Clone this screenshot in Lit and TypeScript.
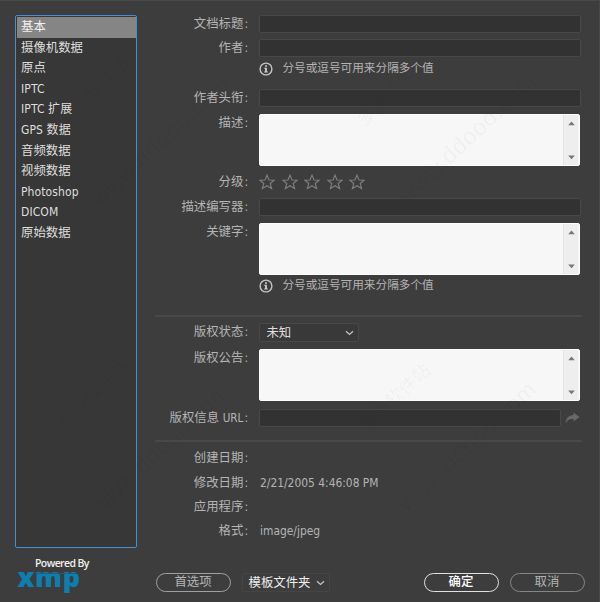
import { LitElement, html, css } from "lit";
import { customElement, property } from "lit/decorators.js";

const FONT = css`"DejaVu Sans Condensed", "DejaVu Sans", "Noto Sans CJK SC", sans-serif`;

@customElement("category-list")
class CategoryList extends LitElement {
  @property({ type: Array }) items: string[] = [];
  static styles = css`
    :host { display: block; box-sizing: border-box; width: 122px; height: 533px; border: 1px solid #4190d8; border-radius: 2px; background: #373737; padding: 1px 0.5px; }
    .item { height: 20.6px; line-height: 19.5px; padding-left: 4.5px; color: #dedede; white-space: nowrap; }
    .latin { font-size: 12px; line-height: 21px; letter-spacing: 0.1px; }
    .selected { background: #858585; color: #f2f2f2; }
  `;
  render() {
    return this.items.map((t, i) => html`<div class="item ${i === 0 ? "selected" : ""} ${/^[A-Z]/.test(t) ? "latin" : ""}">${t}</div>`);
  }
}

@customElement("text-area")
class TextArea extends LitElement {
  static styles = css`
    :host { display: flex; box-sizing: border-box; height: 52px; width: 321px; background: #f7f7f7; border-radius: 2px; overflow: hidden; border: 1px solid #fdfdfd; }
    .body { flex: 1; }
    .bar { width: 15px; background: #eeeeee; border-left: 1px solid #e4e4e4; display: flex; flex-direction: column; justify-content: space-between; align-items: center; padding: 6px 0 5px; box-sizing: border-box; margin-right: 1px; }
    svg { display: block; }
  `;
  render() {
    return html`<div class="body"></div>
      <div class="bar">
        <svg width="7" height="5"><path d="M0.2 4.2 3.5 0.6 6.8 4.2Z" fill="#777" /></svg>
        <svg width="7" height="5"><path d="M0.2 0.6 3.5 4.2 6.8 0.6Z" fill="#777" /></svg>
      </div>`;
  }
}

@customElement("app-root")
class AppRoot extends LitElement {
  static styles = css`
    :host { display: block; position: relative; box-sizing: border-box; width: 600px; height: 602px; overflow: hidden; background: #3d3d3d; border-top: 1px solid #494949; border-right: 1px solid #484848; font-family: ${FONT}; font-stretch: condensed; font-size: 12.4px; color: #b4b4b4; }
    .page { display: grid; grid-template-columns: 122px 426px; column-gap: 18.4px; padding: 14px 0 0 15px; }
    .form { display: grid; grid-template-columns: 93px 322px; column-gap: 11px; align-items: start;
      grid-template-rows: 24px 21px 29px 25px 59px 25px 25px 54px 38px 8px 26px 60px 31px 9px 25px 24px 24px 26px; }
    .label { text-align: right; line-height: 17px; height: 17px; white-space: nowrap; }
    .latin { font-size: 11.6px; }
    .colon { display: inline-block; width: 4px; margin-left: 1px; text-align: left; }
    .input { box-sizing: border-box; width: 321.5px; height: 17.5px; background: #323232; border: 1px solid #484848; border-radius: 2px; }
    .url { display: flex; align-items: center; gap: 4px; }
    .url .input { width: 302px; }
    .hint { display: flex; align-items: center; height: 17px; gap: 9px; grid-column: 2; line-height: 17px; font-size: 11.65px; white-space: nowrap; }
    .stars { display: flex; gap: 6.5px; height: 18px; align-items: center; }
    .rule { grid-column: 1 / 3; height: 2px; background: #494949; width: 427px; }
    .select { box-sizing: border-box; border: 1px solid #484848; border-radius: 2px; background: #393939; color: #dedede; height: 19px; line-height: 16px; display: flex; align-items: center; justify-content: space-between; white-space: nowrap; }
    .status { width: 100px; padding: 0 4px 0 6px; }
    .value { line-height: 18px; font-size: 11.9px; padding-left: 0.6px; }
    .footer { display: flex; align-items: flex-start; height: 40px; padding: 10px 0 0 15px; }
    .logo { width: 64px; margin: 0 74.5px 0 2px; position: relative; }
    .powered { color: #f0f0f0; font: 600 10.5px/12px "Open Sans", sans-serif; letter-spacing: -0.6px; margin: -1px 0 0 18px; white-space: nowrap; }
    .xmp { color: #0c7fb0; font: 800 27px/18px "Open Sans", sans-serif; height: 24px; letter-spacing: 0.6px; margin: -1px 0 0 0.5px; white-space: nowrap; }
    .slit { position: absolute; left: 18px; top: 15px; width: 42px; height: 1px; background: #2d5a70; }
    .btn { box-sizing: border-box; height: 19px; width: 75px; border: 1px solid #a0a0a0; border-radius: 10px; text-align: center; line-height: 16px; margin-top: 15px; }
    .tmpl { width: 88px; margin: 15px 94px 0 11px; padding: 0 4px 0 6px; border-color: #454545; background: none; color: #eee; }
    .ok { border-color: #e0e0e0; color: #fff; font-weight: 500; margin-right: 11px; }
    .cancel { border-color: #858585; }
    .mark { position: absolute; width: 220px; height: 30px; line-height: 30px; margin: -15px 0 0 -110px; text-align: center; transform: rotate(-43deg); color: rgba(10, 20, 50, 0.045); white-space: nowrap; pointer-events: none; font-family: "Liberation Sans", "Noto Sans CJK SC", sans-serif; font-size: 23px; letter-spacing: 0.8px; }
    .cn { font-size: 18px; letter-spacing: 0; }
    .m1 { left: 160px; top: 140px; } .m2 { left: 467px; top: 137px; } .m3 { left: 160px; top: 447px; } .m4 { left: 467px; top: 445px; }
    .m5 { left: 93px; top: 90px; } .m6 { left: 393px; top: 91px; } .m7 { left: 93px; top: 393px; } .m8 { left: 395px; top: 397px; }
    svg { display: block; flex: none; }
  `;

  label(t: string, latin = "") {
    return html`<div class="label">${t}${latin ? html` <span class="latin">${latin}</span>` : ""}<span class="colon">:</span></div>`;
  }
  hint() {
    return html`<div class="hint">
      <svg width="14" height="14" viewBox="0 0 14 14"><circle cx="7" cy="7" r="5.9" fill="none" stroke="#c4c4c4" stroke-width="1.4" /><path d="M6.1 3.2h1.8v1.6H6.1zM5.2 5.8h2.7v3.7h.9v1H5.2v-1h.9V6.8h-.9z" fill="#d0d0d0" /></svg>
      <span>分号或逗号可用来分隔多个值</span>
    </div>`;
  }
  chevron() {
    return html`<svg width="9" height="6" viewBox="0 0 9 6"><path d="M1 1.2 4.5 4.4 8 1.2" fill="none" stroke="#c4c4c4" stroke-width="1.3" /></svg>`;
  }
  star() {
    return html`<svg width="16" height="16" viewBox="0 0 16 16"><path d="M8 1.1 10 6 15.2 6.2 11.2 9.5 12.6 14.6 8 11.7 3.4 14.6 4.8 9.5.8 6.2 6 6Z" fill="none" stroke="#808080" stroke-width="1.1" /></svg>`;
  }
  render() {
    const input = html`<div class="input"></div>`;
    const cats = ["基本", "摄像机数据", "原点", "IPTC", "IPTC 扩展", "GPS 数据", "音频数据", "视频数据", "Photoshop", "DICOM", "原始数据"];
    return html`
      <div class="page">
        <category-list .items=${cats}></category-list>
        <div class="form">
          ${this.label("文档标题")}${input}
          ${this.label("作者")}${input}
          ${this.hint()}
          ${this.label("作者头衔")}${input}
          ${this.label("描述")}<text-area></text-area>
          ${this.label("分级")}
          <div class="stars">${[1, 2, 3, 4, 5].map(() => this.star())}</div>
          ${this.label("描述编写器")}${input}
          ${this.label("关键字")}<text-area></text-area>
          ${this.hint()}
          <div class="rule"></div>
          ${this.label("版权状态")}
          <div class="select status">未知${this.chevron()}</div>
          ${this.label("版权公告")}<text-area></text-area>
          ${this.label("版权信息", "URL")}
          <div class="url">${input}<svg width="15" height="12" viewBox="0 0 15 12"><path d="M8.5 0.5 14.5 5 8.5 9.6V6.8C5 6.7 2.5 8 .6 11.2.9 6.5 3.7 3.3 8.5 3.1Z" fill="#686868" /></svg></div>
          <div class="rule"></div>
          ${this.label("创建日期")}<div class="value"></div>
          ${this.label("修改日期")}<div class="value">2/21/2005 4:46:08 PM</div>
          ${this.label("应用程序")}<div class="value"></div>
          ${this.label("格式")}<div class="value">image/jpeg</div>
        </div>
      </div>
      <div class="footer">
        <div class="logo"><div class="powered">Powered By</div><div class="xmp">xmp</div><div class="slit"></div></div>
        <div class="btn">首选项</div>
        <div class="select tmpl">模板文件夹${this.chevron()}</div>
        <div class="btn ok">确定</div>
        <div class="btn cancel">取消</div>
      </div>
      ${[1, 2, 3, 4].map((n) => html`<div class="mark m${n}">www.ddooo.com</div>`)}
      ${[5, 6, 7, 8].map((n) => html`<div class="mark cn m${n}">多多软件站</div>`)}
    `;
  }
}
